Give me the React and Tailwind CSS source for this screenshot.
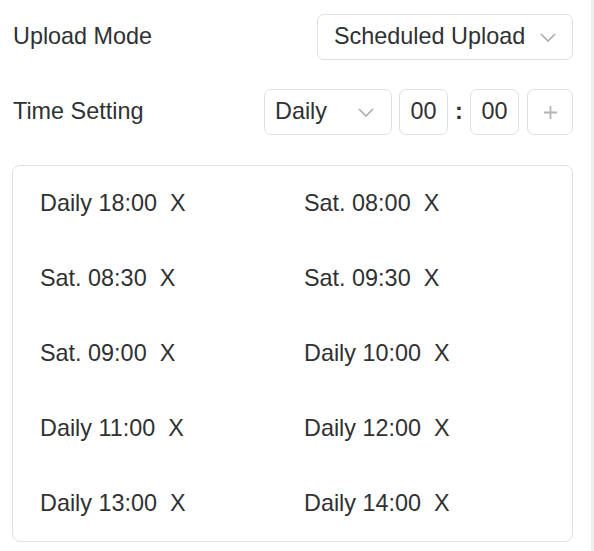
import React, { useState } from "react";

const schedules = [
  "Daily 18:00",
  "Sat. 08:00",
  "Sat. 08:30",
  "Sat. 09:30",
  "Sat. 09:00",
  "Daily 10:00",
  "Daily 11:00",
  "Daily 12:00",
  "Daily 13:00",
  "Daily 14:00",
];

const Chevron = ({ className }) => (
  <svg className={className} width="16" height="9" viewBox="0 0 16 9" fill="none">
    <path d="M1 1l7 7 7-7" stroke="#a8abb2" strokeWidth="1.6" />
  </svg>
);

const App = () => {
  const [items, setItems] = useState(schedules);

  return (
    <div className="flex min-h-[551px] bg-white font-['Liberation_Sans',Arial,sans-serif] text-[23.4px] text-[#303133]">
      <div className="w-[591px] pl-[12px] pr-[18px] pt-[14px]">
        {/* Upload mode */}
        <div className="flex h-[46px] items-center">
          <span className="pl-[1px]">Upload Mode</span>
          <button className="ml-auto flex h-[46px] w-[256px] items-center justify-between rounded-[7px] border border-[#e0e0e0] pl-[16px] pr-[16px]">
            <span>Scheduled Upload</span>
            <Chevron />
          </button>
        </div>

        {/* Time setting */}
        <div className="mt-[29px] flex h-[46px] items-center">
          <span className="pl-[1px]">Time Setting</span>
          <button className="ml-auto flex h-[46px] w-[128px] items-center justify-between rounded-[7px] border border-[#e0e0e0] pl-[10px] pr-[17px]">
            <span>Daily</span>
            <Chevron />
          </button>
          <div className="ml-[7px] flex h-[46px] w-[49px] items-center justify-center rounded-[7px] border border-[#e0e0e0]">
            00
          </div>
          <span className="w-[22px] text-center font-bold">:</span>
          <div className="flex h-[46px] w-[49px] items-center justify-center rounded-[7px] border border-[#e0e0e0]">
            00
          </div>
          <button className="ml-[8px] flex h-[46px] w-[46px] items-center justify-center rounded-[7px] border border-[#e0e0e0]">
            <svg width="13" height="13" viewBox="0 0 13 13">
              <path d="M6.5 0v13M0 6.5h13" stroke="#b4b4b4" strokeWidth="1.8" />
            </svg>
          </button>
        </div>

        {/* Schedule list */}
        <div className="mt-[30px] grid grid-cols-[264px_1fr] rounded-[8px] border border-[#e0e0e0] pl-[27px]">
          {items.map((item) => (
            <div key={item} className="flex h-[75px] items-center">
              <span>{item}</span>
              <span
                className="ml-[13px] cursor-pointer"
                onClick={() => setItems(items.filter((i) => i !== item))}
              >
                X
              </span>
            </div>
          ))}
        </div>
      </div>
      <div className="w-[3px] bg-[#efefef]" />
    </div>
  );
};

export default App;
